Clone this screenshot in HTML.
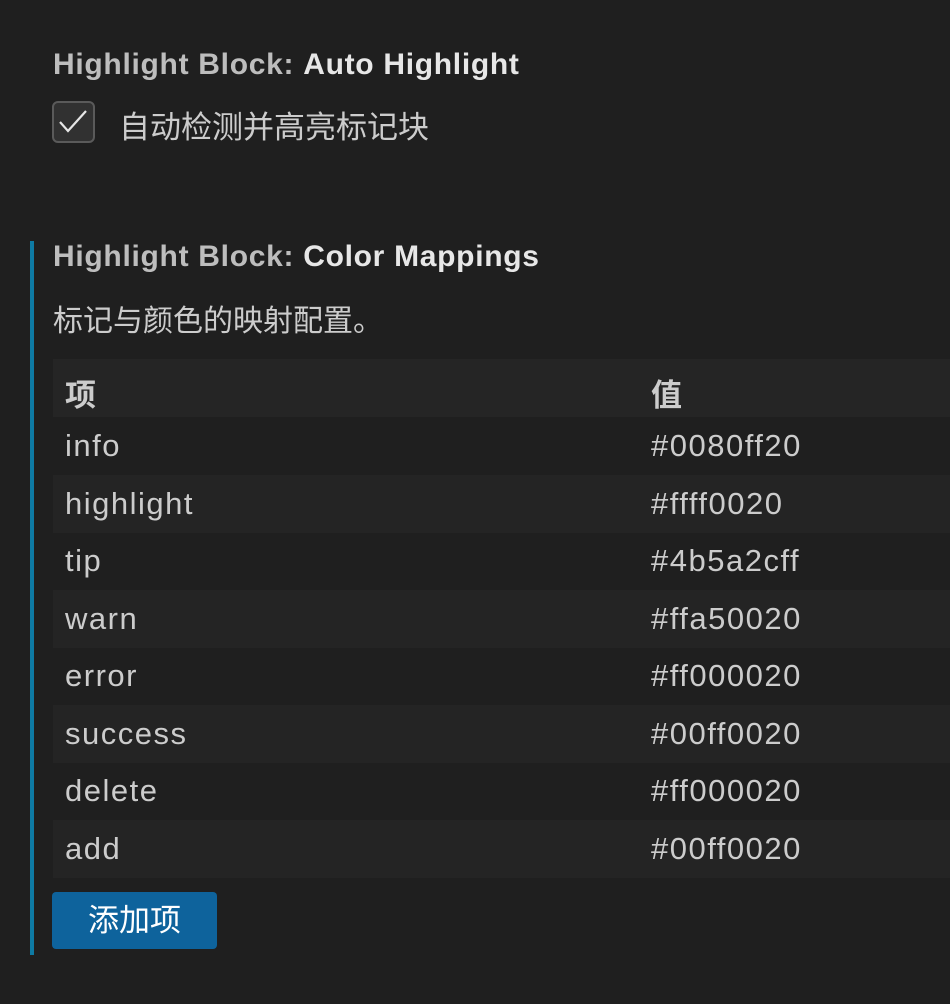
<!DOCTYPE html>
<html><head><meta charset="utf-8"><style>
*{margin:0;padding:0;box-sizing:border-box}
body{width:950px;height:1004px;background:#1f1f1f;font-family:"Liberation Sans","Noto Sans CJK SC",sans-serif;color:#cccccc;position:relative;overflow:hidden}
.t{position:absolute;left:53px;font-size:30px;letter-spacing:0.7px;font-weight:bold;color:#bdbdbd;white-space:nowrap}
.t b{color:#e7e7e7}
.cb{position:absolute;left:52px;top:101px;width:43px;height:42px;border:2px solid #5a5a5a;border-radius:6px;background:#313131}
.lbl{position:absolute;left:119px;top:102px;font-size:31px;color:#cccccc;white-space:nowrap}
.bar{position:absolute;left:30px;top:241px;width:4px;height:714px;background:#0e7aa3}
.desc{position:absolute;left:53px;top:296px;font-size:30px;color:#cccccc;white-space:nowrap}
.row{position:absolute;left:53px;width:897px;height:58px;font-size:31px;letter-spacing:1.5px;color:#cccccc}
.row span{position:absolute;top:11px;white-space:nowrap}
.row .a{left:12px}.row .b{left:598px}
.h{background:#252525;font-weight:bold;letter-spacing:0}
.alt{background:#242424}
.btn{position:absolute;left:52px;top:892px;width:165px;height:57px;background:#0e639c;border-radius:4px;color:#fff;font-size:31px;text-align:center;line-height:57px}
</style></head><body>
<div class="t" style="top:48px">Highlight Block: <b>Auto Highlight</b></div>
<div class="cb"><svg width="39" height="38" viewBox="0 0 39 38"><path d="M6 19 L14 28 L32 8" fill="none" stroke="#e6e6e6" stroke-width="2.2"/></svg></div>
<div class="lbl">自动检测并高亮标记块</div>
<div class="bar"></div>
<div class="t" style="top:240px">Highlight Block: <b>Color Mappings</b></div>
<div class="desc">标记与颜色的映射配置。</div>
<div class="row h" style="top:359px"><span class="a">项</span><span class="b">值</span></div>
<div class="row" style="top:417px"><span class="a">info</span><span class="b">#0080ff20</span></div>
<div class="row alt" style="top:475px"><span class="a">highlight</span><span class="b">#ffff0020</span></div>
<div class="row" style="top:532px"><span class="a">tip</span><span class="b">#4b5a2cff</span></div>
<div class="row alt" style="top:590px"><span class="a">warn</span><span class="b">#ffa50020</span></div>
<div class="row" style="top:647px"><span class="a">error</span><span class="b">#ff000020</span></div>
<div class="row alt" style="top:705px"><span class="a">success</span><span class="b">#00ff0020</span></div>
<div class="row" style="top:762px"><span class="a">delete</span><span class="b">#ff000020</span></div>
<div class="row alt" style="top:820px"><span class="a">add</span><span class="b">#00ff0020</span></div>
<div class="btn">添加项</div>
</body></html>
